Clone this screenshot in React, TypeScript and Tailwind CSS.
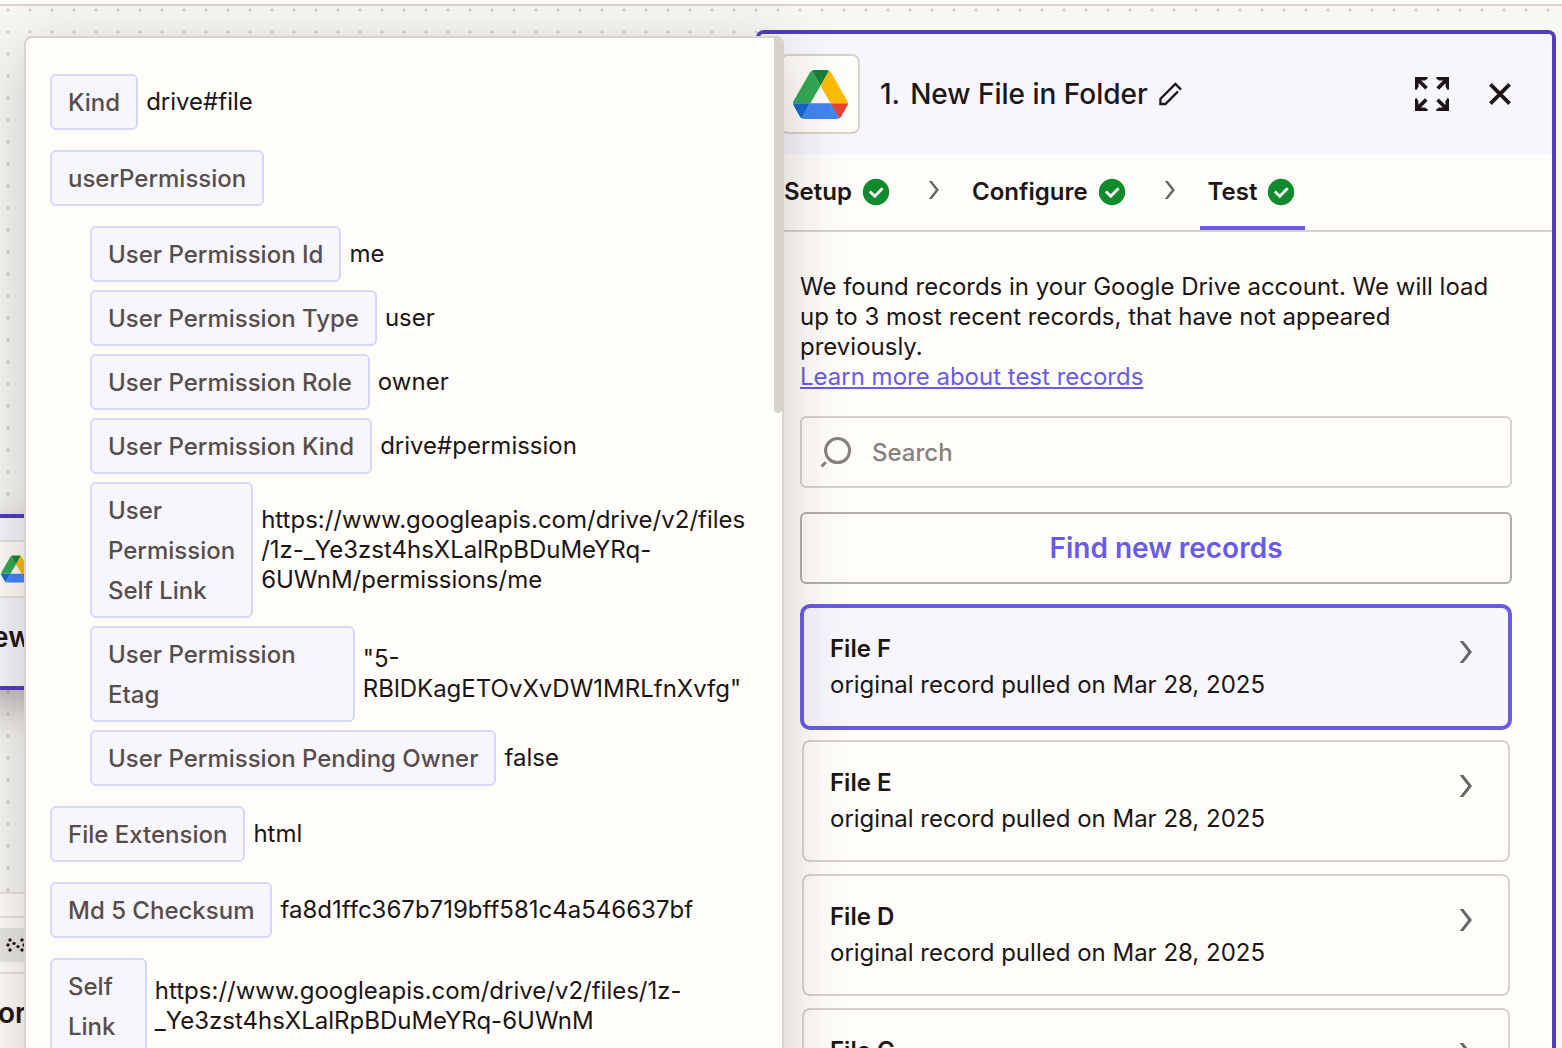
import React from "react";
import { clsx } from "clsx";

type Field = { label: string; value?: string; children?: Field[] };

const fields: Field[] = [
  { label: "Kind", value: "drive#file" },
  {
    label: "userPermission",
    children: [
      { label: "User Permission Id", value: "me" },
      { label: "User Permission Type", value: "user" },
      { label: "User Permission Role", value: "owner" },
      { label: "User Permission Kind", value: "drive#permission" },
      { label: "User Permission Self Link", value: "https://www.googleapis.com/drive/v2/files/1z-_Ye3zst4hsXLalRpBDuMeYRq-6UWnM/permissions/me" },
      { label: "User Permission Etag", value: '"5-RBlDKagETOvXvDW1MRLfnXvfg"' },
      { label: "User Permission Pending Owner", value: "false" },
    ],
  },
  { label: "File Extension", value: "html" },
  { label: "Md 5 Checksum", value: "fa8d1ffc367b719bff581c4a546637bf" },
  { label: "Self Link", value: "https://www.googleapis.com/drive/v2/files/1z-_Ye3zst4hsXLalRpBDuMeYRq-6UWnM" },
];

const tabs = ["Setup", "Configure", "Test"];

const records = [
  { name: "File F", note: "original record pulled on Mar 28, 2025" },
  { name: "File E", note: "original record pulled on Mar 28, 2025" },
  { name: "File D", note: "original record pulled on Mar 28, 2025" },
  { name: "File C", note: "original record pulled on Mar 28, 2025" },
];

const DriveLogo = ({ className }: { className: string }) => (
  <svg viewBox="0 0 87.3 78" className={className} aria-hidden="true">
    <path d="m6.6 66.85 3.85 6.65c.8 1.4 1.95 2.5 3.3 3.3l13.75-23.8h-27.5c0 1.55.4 3.1 1.2 4.5z" fill="#1967d2" />
    <path d="m43.65 25-13.75-23.8c-1.35.8-2.5 1.9-3.3 3.3l-25.4 44a9.06 9.06 0 0 0 -1.2 4.5h27.5z" fill="#34a853" />
    <path d="m73.55 76.8c1.35-.8 2.5-1.9 3.3-3.3l1.6-2.75 7.65-13.25c.8-1.4 1.2-2.95 1.2-4.5h-27.502l5.852 11.5z" fill="#ea4335" />
    <path d="m43.65 25 13.75-23.8c-1.35-.8-2.9-1.2-4.5-1.2h-18.5c-1.6 0-3.15.45-4.5 1.2z" fill="#188038" />
    <path d="m59.8 53h-32.3l-13.75 23.8c1.35.8 2.9 1.2 4.5 1.2h50.8c1.6 0 3.15-.45 4.5-1.2z" fill="#4285f4" />
    <path d="m73.4 26.5-12.7-22c-.8-1.4-1.95-2.5-3.3-3.3l-13.75 23.8 16.15 28h27.45c0-1.55-.4-3.1-1.2-4.5z" fill="#fbbc04" />
  </svg>
);

const PencilIcon = () => (
  <svg viewBox="0 0 24 24" className="size-6" fill="none" stroke="currentColor" strokeWidth="2.3" aria-hidden="true">
    <path d="M23 7.6 17.4 2 2.4 17v5h5L20 9.4" />
  </svg>
);

const ExpandIcon = () => (
  <svg viewBox="0 0 34 34" className="size-[34px]" fill="currentColor" aria-hidden="true">
    {[0, 90, 180, 270].map((angle) => (
      <path key={angle} transform={`rotate(${angle} 17 17)`} d="M0 0h12l1.2 1.2-3.4 2.2H6.2l6.6 6.6-2.6 2.6L3.6 6v3.8l-2.4 3.4L0 12z" />
    ))}
  </svg>
);

const CloseIcon = () => (
  <svg viewBox="0 0 24 24" className="size-6" fill="none" stroke="currentColor" strokeWidth="3.8" aria-hidden="true">
    <path d="m2.4 2.4 19.2 19.2M21.6 2.4 2.4 21.6" />
  </svg>
);

const CheckIcon = () => (
  <svg viewBox="0 0 28 28" className="size-7" aria-hidden="true">
    <circle cx="14" cy="14" r="13.2" fill="#0f8a2c" />
    <path d="m7.8 13.4 5 4.8 7.8-8" fill="none" stroke="#fffdf9" strokeWidth="2.8" />
  </svg>
);

const ChevronIcon = ({ className }: { className: string }) => (
  <svg viewBox="0 0 14 22" className={className} fill="#666" aria-hidden="true">
    <path d="M.6 0h3.8L13 11 4.4 22H.6l8.6-11z" />
  </svg>
);

const SearchIcon = () => (
  <svg viewBox="0 0 32 32" className="size-8" fill="none" stroke="currentColor" strokeWidth="3" aria-hidden="true">
    <circle cx="17.6" cy="14.6" r="12" />
    <path d="m5.8 26.2-4.2 4.2" />
  </svg>
);

const DottedIcon = () => (
  <svg viewBox="0 0 20 14" className="h-3.5 w-5" fill="#201515" aria-hidden="true">
    {[[4, 2], [16, 2], [2, 7], [8, 5.4], [12, 8.6], [18, 7], [4, 12], [16, 12]].map(([cx, cy]) => (
      <circle key={`${cx}-${cy}`} cx={cx} cy={cy} r="1.7" />
    ))}
  </svg>
);

const FieldRow = ({ field }: { field: Field }) => (
  <li>
    <div className="flex items-center gap-2">
      <span className="rounded-md border-2 border-[#d6d7fc] bg-[#f7f6fd] px-4 pt-[7px] pb-[5px] leading-10 font-medium text-[#574e4c]">
        {field.label}
      </span>
      {field.value && <span className="min-w-0 leading-[30px] [overflow-wrap:anywhere]">{field.value}</span>}
    </div>
    {field.children && (
      <ul className="mt-5 flex flex-col gap-2 pl-10">
        {field.children.map((child) => (
          <FieldRow key={child.label} field={child} />
        ))}
      </ul>
    )}
  </li>
);

// steps on the canvas, mostly hidden behind the popover
const CanvasNodes = () => (
  <>
    <div className="absolute top-[508px] -left-12 w-1/2 rounded-lg border-4 border-[#503ebd] bg-[#f7f6fd] px-5 pt-[22px] pb-[26px] shadow-[0_16px_40px_rgba(32,21,21,0.3)]">
      <div className="flex h-[58px] w-52 items-center rounded-md border-2 border-[#e8e5dd] bg-[#fffdf9] pl-[23px]">
        <DriveLogo className="h-7 w-[30px]" />
      </div>
      <p className="mt-4 pl-4 text-[28px] leading-[46px] font-semibold">ew</p>
    </div>
    <div className="absolute top-[886px] -left-12 w-1/2 rounded-lg border-2 border-[#e8e5dd] bg-[#fffdf9] px-5 py-[22px]">
      <div className="flex h-[58px] w-52 items-center rounded-md border-2 border-[#e8e5dd] bg-[#fffdf9]">
        <div className="flex h-[34px] w-full items-center bg-[#e8e7e4] pl-[30px]">
          <DottedIcon />
        </div>
      </div>
      <p className="mt-4 pl-6 text-[28px] leading-[46px] font-semibold">or</p>
    </div>
  </>
);

const FieldsPopover = () => (
  <section
    aria-label="Record data"
    className="absolute top-[30px] right-[778px] -bottom-24 flex w-[760px] overflow-hidden rounded-lg border-2 border-[#d7d3c9] bg-[#fffdf9] shadow-[0_16px_64px_rgba(32,21,21,0.22)]"
  >
    <ul className="flex min-w-0 flex-1 flex-col gap-5 py-9 pl-6">
      {fields.map((field) => (
        <FieldRow key={field.label} field={field} />
      ))}
    </ul>
    <div className="flex w-8 shrink-0 justify-end">
      <div className="h-[375px] w-2 rounded-b-full bg-[#d7d3c9]" />
    </div>
  </section>
);

const StepPanel = () => (
  <section className="mt-6 mr-1.5 flex w-[800px] flex-col overflow-hidden rounded-t-lg border-4 border-b-0 border-[#503ebd] bg-[#fffdf9]">
    <header className="flex shrink-0 items-center bg-[#f7f6fd] py-5 pr-10 pl-5">
      <div className="flex size-20 items-center justify-center rounded-lg border-2 border-[#d7d3c9] bg-[#fffdf9]">
        <DriveLogo className="h-[49px] w-[55px]" />
      </div>
      <h1 className="ml-5 flex gap-2.5 text-[28px] leading-9 font-medium">
        <span>1.</span>
        <span>New File in Folder</span>
      </h1>
      <button aria-label="Rename step" className="ml-2.5">
        <PencilIcon />
      </button>
      <button aria-label="Expand" className="ml-auto">
        <ExpandIcon />
      </button>
      <button aria-label="Close" className="ml-[39px]">
        <CloseIcon />
      </button>
    </header>

    <nav className="flex h-[78px] shrink-0 items-stretch border-b-2 border-[#d7d3c9] px-4">
      {tabs.map((tab, i) => (
        <React.Fragment key={tab}>
          {i > 0 && (
            <span className="flex w-16 items-center justify-center pb-1 pl-1">
              <ChevronIcon className="h-[18px] w-3" />
            </span>
          )}
          <button
            className={clsx(
              "flex items-center gap-2.5 border-b-4 pt-1 pr-2.5 pl-2 font-semibold",
              tab === "Test" ? "border-[#695be8]" : "border-transparent"
            )}
          >
            {tab}
            <CheckIcon />
          </button>
        </React.Fragment>
      ))}
    </nav>

    <div className="flex flex-col px-10 pt-10">
      <p className="leading-[30px]">
        We found records in your Google Drive account. We will load up to 3 most recent records, that have not appeared
        previously.
        <br />
        <a href="#test-records" className="text-[#695be8] underline underline-offset-2">
          Learn more about test records
        </a>
      </p>
      <label className="mt-6 flex h-[72px] shrink-0 items-center gap-5 rounded-md border-2 border-[#d7d3c9] px-[18px] text-[#88807e]">
        <SearchIcon />
        <input
          type="search"
          aria-label="Search"
          placeholder="Search"
          className="min-w-0 flex-1 pt-0.5 font-medium outline-none placeholder:text-[#88807e]"
        />
      </label>
      <button className="mt-6 h-[72px] shrink-0 rounded-md border-2 border-[#b3afa7] pt-0.5 pl-5 text-[28px] font-semibold text-[#695be8]">
        Find new records
      </button>
      <ul className="mt-[22px] flex flex-col gap-3 px-0.5">
        {records.map((record, i) => (
          <li key={record.name}>
            <button
              className={clsx(
                "flex w-full items-start justify-between rounded-lg border-2 p-[26px] text-left leading-[30px]",
                i === 0 ? "border-[#695be8] bg-[#f7f6fd] ring-2 ring-[#695be8]" : "border-[#d7d3c9]"
              )}
            >
              <span className="flex flex-col gap-1.5">
                <span className="font-semibold">{record.name}</span>
                <span>{record.note}</span>
              </span>
              <ChevronIcon className="mt-[7px] mr-[9px] h-[22px] w-3.5" />
            </button>
          </li>
        ))}
      </ul>
    </div>
  </section>
);

const App = () => {
  return (
    <div className="flex h-screen flex-col overflow-hidden bg-[#fffdf9] font-['Inter',sans-serif] text-2xl text-[#201515]">
      <div className="h-1.5 shrink-0 border-b-2 border-[#d7d3c9]" />
      <main className="relative flex min-h-0 flex-1 justify-end overflow-hidden bg-[#f8f7f4] bg-[radial-gradient(circle_at_8px_4px,#d3cfc6_1px,transparent_2px)] bg-[size:22px_22px]">
        <CanvasNodes />
        <StepPanel />
        <FieldsPopover />
      </main>
    </div>
  );
};

export default App;
